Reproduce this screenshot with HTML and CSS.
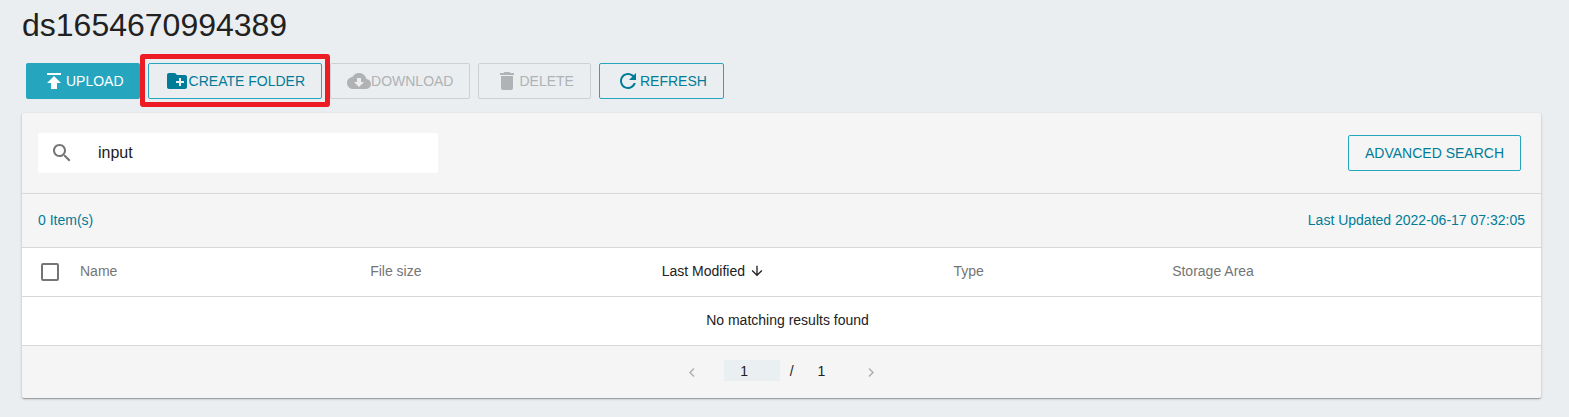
FILE: index.html
```
<!DOCTYPE html>
<html lang="en">
<head>
    <meta charset="UTF-8">
    <meta name="viewport" content="width=device-width, initial-scale=1.0">
    <title>ds1654670994389</title>
    <link rel="stylesheet" href="styles.css">
</head>
<body>

    <h1>ds1654670994389</h1>

    <div class="toolbar">
        <button type="button" class="btn btn-primary">
            <svg class="icon" viewBox="0 0 24 24"><path d="M5 4v2h14V4H5zm0 10h4v6h6v-6h4l-7-7-7 7z"/></svg>Upload
        </button>
        <div class="highlight">
            <button type="button" class="btn">
                <svg class="icon" viewBox="0 0 24 24"><path d="M20 6h-8l-2-2H4c-1.11 0-1.99.89-1.99 2L2 18c0 1.11.89 2 2 2h16c1.11 0 2-.89 2-2V8c0-1.11-.89-2-2-2zm-1 8h-3v3h-2v-3h-3v-2h3V9h2v3h3v2z"/></svg>Create Folder
            </button>
        </div>
        <button type="button" class="btn" disabled>
            <svg class="icon" viewBox="0 0 24 24"><path d="M19.35 10.04C18.67 6.59 15.64 4 12 4 9.11 4 6.6 5.64 5.35 8.04 2.34 8.36 0 10.91 0 14c0 3.31 2.69 6 6 6h13c2.76 0 5-2.24 5-5 0-2.64-2.05-4.78-4.65-4.96zM17 13l-5 5-5-5h3V9h4v4h3z"/></svg>Download
        </button>
        <button type="button" class="btn" disabled>
            <svg class="icon" viewBox="0 0 24 24"><path d="M6 19c0 1.1.9 2 2 2h8c1.1 0 2-.9 2-2V7H6v12zM19 4h-3.500l-1-1h-5l-1 1H5v2h14V4z"/></svg>Delete
        </button>
        <button type="button" class="btn">
            <svg class="icon" viewBox="0 0 24 24"><path d="M17.650 6.350C16.200 4.900 14.210 4 12 4c-4.420 0-7.990 3.580-7.990 8s3.570 8 7.990 8c3.730 0 6.840-2.550 7.730-6h-2.080c-.82 2.330-3.040 4-5.650 4-3.310 0-6-2.690-6-6s2.690-6 6-6c1.660 0 3.140.69 4.220 1.780L13 11h7V4l-2.350 2.350z"/></svg>Refresh
        </button>
    </div>

    <div class="card">
        <div class="search-row">
            <label class="search">
                <svg class="icon" viewBox="0 0 24 24"><path d="M15.500 14h-.79l-.28-.27C15.410 12.590 16 11.110 16 9.500 16 5.910 13.090 3 9.500 3S3 5.910 3 9.500 5.910 16 9.500 16c1.610 0 3.090-.59 4.230-1.570l.27.28v.79l5 4.990L20.490 19l-4.990-5zm-6 0C7.010 14 5 11.990 5 9.500S7.010 5 9.500 5 14 7.010 14 9.500 11.990 14 9.500 14z"/></svg>
                <input type="text" value="input" aria-label="Search">
            </label>
            <button type="button" class="btn">Advanced Search</button>
        </div>

        <div class="info-row">
            <span>0 Item(s)</span>
            <span>Last Updated 2022-06-17 07:32:05</span>
        </div>

        <table>
            <thead>
                <tr>
                    <th class="col-check"><input type="checkbox" aria-label="Select all"></th>
                    <th class="col-name">Name</th>
                    <th class="col-size">File size</th>
                    <th class="col-modified sorted">Last Modified<svg class="sort-icon" viewBox="0 0 24 24"><path d="M20 12l-1.410-1.410L13 16.170V4h-2v12.170l-5.580-5.590L4 12l8 8 8-8z"/></svg></th>
                    <th class="col-type">Type</th>
                    <th>Storage Area</th>
                </tr>
            </thead>
            <tbody>
                <tr>
                    <td class="empty" colspan="6">No matching results found</td>
                </tr>
            </tbody>
        </table>

        <div class="pager">
            <button type="button" class="page-btn" aria-label="Previous page" disabled>
                <svg viewBox="0 0 16 16"><path d="M10 5.500l-4 4 4 4"/></svg>
            </button>
            <input type="text" class="page-input" value="1" aria-label="Page">
            <span class="slash">/</span>
            <span class="page-total">1</span>
            <button type="button" class="page-btn" aria-label="Next page" disabled>
                <svg viewBox="0 0 16 16"><path d="M6 5.500l4 4-4 4"/></svg>
            </button>
        </div>
    </div>

</body>
</html>
```
FILE: styles.css
```
* {
    box-sizing: border-box;
}
body {
    margin: 0;
    padding: 4px 28px 16px 22px;
    background-color: #eaeef1;
    font-family: "Liberation Sans", Arial, sans-serif;
    font-size: 14px;
    color: #212121;
}
h1 {
    margin: 0;
    font-size: 32px;
    font-weight: 400;
    line-height: 43px;
}
input, button {
    font-family: inherit;
}
/* Buttons */
.toolbar {
    display: flex;
    gap: 8px;
    padding: 16px 4px 14px;
}
.btn {
    display: flex;
    align-items: center;
    height: 36px;
    padding: 0 16px;
    border: 1px solid #26a5bf;
    border-radius: 2px;
    background: transparent;
    color: #007c98;
    font-size: 14px;
    text-transform: uppercase;
    white-space: nowrap;
    cursor: pointer;
}
.btn-primary {
    padding: 0 16px;
    border: none;
    background: #26a5bf;
    color: #fff;
}
.btn:disabled {
    border-color: #cdd1d3;
    color: #b0b2b4;
    cursor: default;
}
.icon {
    width: 24px;
    height: 24px;
    flex-shrink: 0;
    fill: currentColor;
}
/* Red frame around the button */
.highlight {
    position: relative;
}
.highlight::after {
    content: "";
    position: absolute;
    inset: -9px -8px -8px;
    border: 5px solid #ed1c24;
    border-radius: 3px;
    pointer-events: none;
}
/* Card */
.card {
    background: #f5f5f5;
    border-radius: 2px;
    box-shadow: 0 1px 3px 0 rgba(0, 0, 0, 0.2), 0 1px 1px 0 rgba(0, 0, 0, 0.14), 0 2px 1px -1px rgba(0, 0, 0, 0.12);
}
.search-row {
    display: flex;
    justify-content: space-between;
    align-items: center;
    padding: 20px 20px 20px 16px;
    border-bottom: 1px solid #d8d8d8;
}
.search {
    display: flex;
    align-items: center;
    gap: 24px;
    width: 400px;
    height: 40px;
    padding: 0 12px;
    border-radius: 2px;
    background: #fff;
    color: #757575;
}
.search input {
    flex: 1;
    padding: 0;
    border: none;
    outline: none;
    background: transparent;
    color: #212121;
    font-size: 16px;
}
.info-row {
    display: flex;
    justify-content: space-between;
    align-items: center;
    height: 54px;
    padding: 0 16px 2px;
    border-bottom: 1px solid #d8d8d8;
    color: #007c98;
}
/* Table */
table {
    width: 100%;
    table-layout: fixed;
    border-spacing: 0;
    background: #fff;
}
th, td {
    height: 49px;
    padding: 0 0 2px;
    border-bottom: 1px solid #d8d8d8;
    font-weight: 400;
    text-align: left;
}
th {
    color: #757575;
}
th.sorted {
    color: #212121;
}
.col-check {
    width: 58px;
    padding: 0 0 0 19px;
}
.col-name {
    width: 19.1%;
}
.col-size,
.col-modified {
    width: 19.2%;
}
.col-type {
    width: 14.4%;
}
.col-check input {
    display: block;
    appearance: none;
    width: 18px;
    height: 18px;
    margin: 0;
    border: 2px solid #757575;
    border-radius: 2px;
}
.sort-icon {
    width: 16px;
    height: 16px;
    margin-left: 4px;
    vertical-align: -3px;
    fill: currentColor;
}
.empty {
    padding-left: 12px;
    text-align: center;
}
/* Pagination */
.pager {
    display: flex;
    justify-content: center;
    align-items: center;
    height: 52px;
    padding-bottom: 3px;
}
.page-btn {
    display: flex;
    justify-content: center;
    align-items: center;
    width: 32px;
    height: 32px;
    padding: 0;
    border: none;
    background: transparent;
}
.page-btn svg {
    width: 16px;
    height: 16px;
    fill: none;
    stroke: #b0b0b0;
    stroke-width: 1.5;
}
.page-input {
    width: 56px;
    height: 21px;
    margin-left: 16px;
    padding: 0 15px 0 0;
    border: none;
    background: #eaeff2;
    color: #212121;
    font-size: 14px;
    text-align: center;
}
.slash {
    margin: 0 24px 0 10px;
}
.page-total {
    margin-right: 30px;
}
```
